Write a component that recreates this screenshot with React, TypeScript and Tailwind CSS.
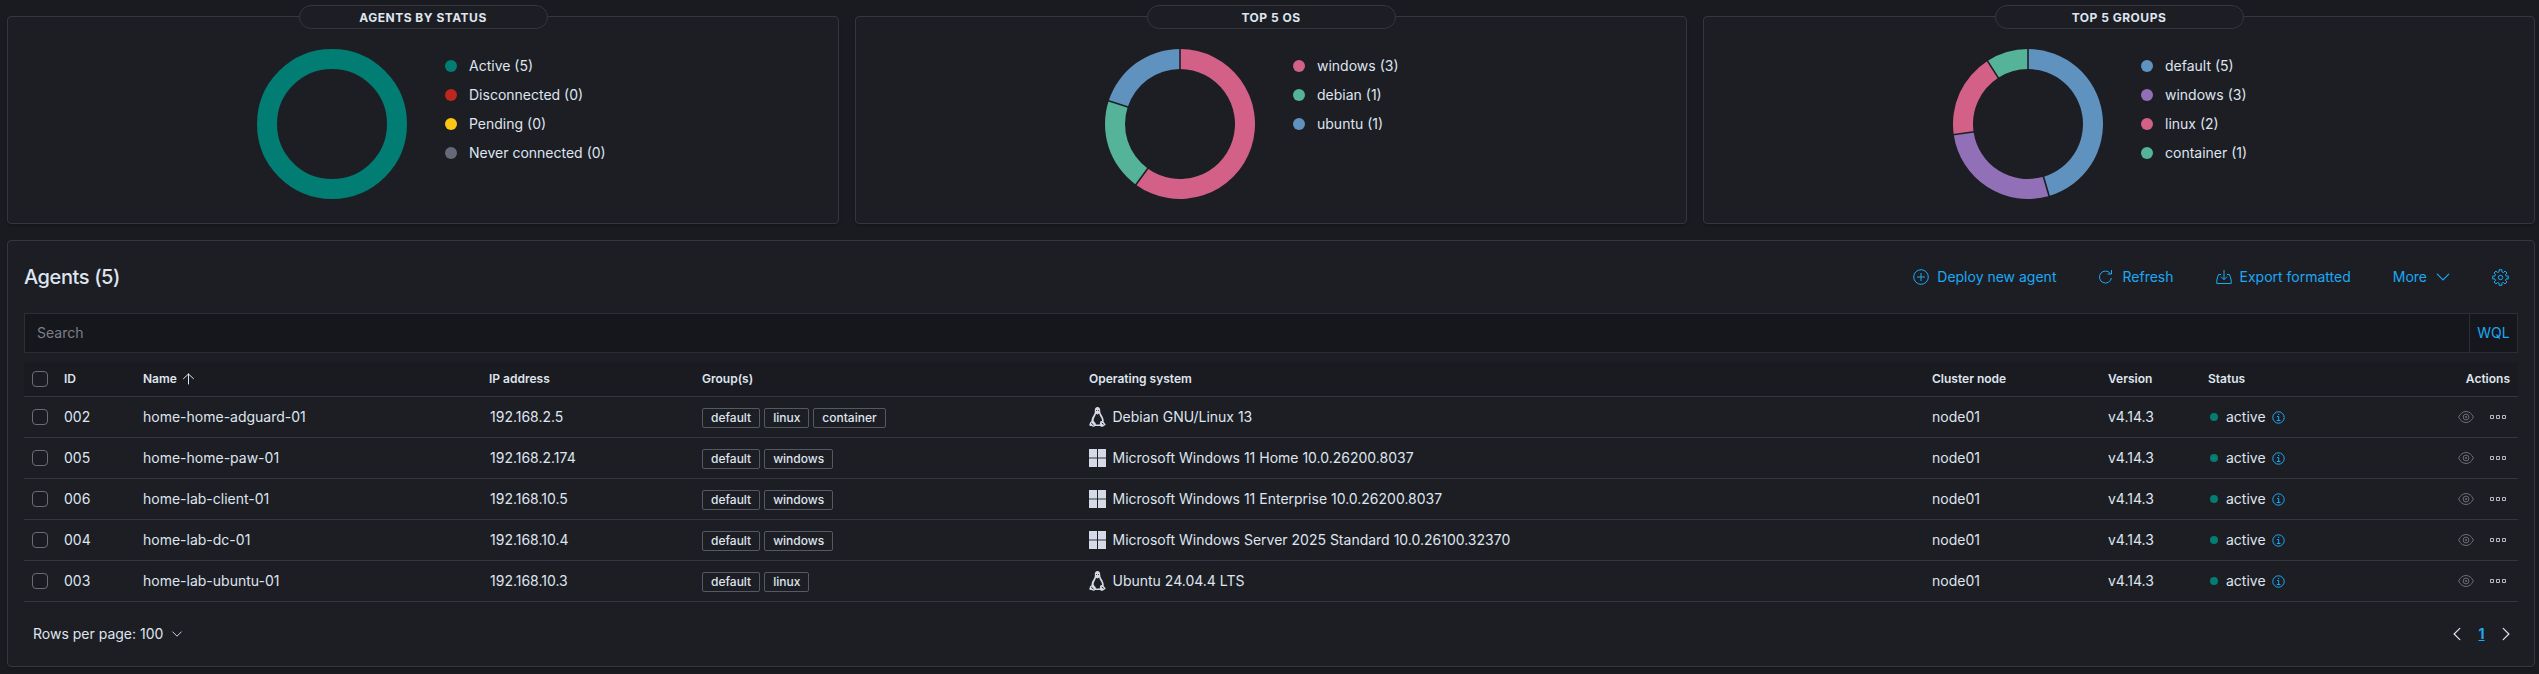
import React from "react";

const FONT = "font-['Inter','Noto_Sans',sans-serif]";

type Slice = { label: string; value: number; color: string };

const charts: { title: string; slices: Slice[] }[] = [
  {
    title: "AGENTS BY STATUS",
    slices: [
      { label: "Active", value: 5, color: "#017d73" },
      { label: "Disconnected", value: 0, color: "#bd271e" },
      { label: "Pending", value: 0, color: "#fec514" },
      { label: "Never connected", value: 0, color: "#646a77" },
    ],
  },
  {
    title: "TOP 5 OS",
    slices: [
      { label: "windows", value: 3, color: "#d36086" },
      { label: "debian", value: 1, color: "#54b399" },
      { label: "ubuntu", value: 1, color: "#6092c0" },
    ],
  },
  {
    title: "TOP 5 GROUPS",
    slices: [
      { label: "default", value: 5, color: "#6092c0" },
      { label: "windows", value: 3, color: "#9170b8" },
      { label: "linux", value: 2, color: "#d36086" },
      { label: "container", value: 1, color: "#54b399" },
    ],
  },
];

function Donut({ slices }: { slices: Slice[] }) {
  const shown = slices.filter((s) => s.value > 0);
  const total = shown.reduce((n, s) => n + s.value, 0);
  if (shown.length === 1) {
    return (
      <svg width="150" height="150" viewBox="0 0 150 150">
        <circle cx="75" cy="75" r="65" fill="none" stroke={shown[0].color} strokeWidth="20" />
      </svg>
    );
  }
  const at = (a: number, r: number) => `${75 + r * Math.sin(a)} ${75 - r * Math.cos(a)}`;
  let start = 0;
  return (
    <svg width="150" height="150" viewBox="0 0 150 150">
      {shown.map((s) => {
        const end = start + (s.value / total) * Math.PI * 2;
        const large = end - start > Math.PI ? 1 : 0;
        const d = `M${at(start, 75)}A75 75 0 ${large} 1 ${at(end, 75)}L${at(end, 55)}A55 55 0 ${large} 0 ${at(start, 55)}Z`;
        start = end;
        return <path key={s.label} d={d} fill={s.color} />;
      })}
      {shown.map((s) => {
        start += (s.value / total) * Math.PI * 2;
        return <path key={s.label} d={`M${at(start, 54)}L${at(start, 76)}`} stroke="#1d1e24" strokeWidth="1.6" />;
      })}
    </svg>
  );
}

function ChartCard({ title, slices }: { title: string; slices: Slice[] }) {
  return (
    <section className="flex h-[208px] w-[832px] flex-col items-center rounded-[4px] border border-[#343741] bg-[#1d1e24] shadow-[0_2px_3px_rgba(0,0,0,0.2)]">
      <h2 className="-mt-[12px] flex h-6 w-[249px] shrink-0 items-center justify-center rounded-[12px] border border-[#343741] bg-[#1d1e24] pt-0.5 text-[12px] font-bold tracking-[0.5px] text-[#dfe5ef]">
        {title}
      </h2>
      <div className="mt-5 flex w-full pl-[249px]">
        <Donut slices={slices} />
        <ul className="ml-[38px] mt-[2.5px] flex flex-col">
          {slices.map((s) => (
            <li key={s.label} className="flex h-[29px] items-center gap-3 text-[14px] text-[#dfe5ef]">
              <span className="size-3 rounded-full" style={{ backgroundColor: s.color }} />
              {s.label} ({s.value})
            </li>
          ))}
        </ul>
      </div>
    </section>
  );
}

type IconProps = { className?: string };

const PlusCircle = () => (
  <svg width="16" height="16" viewBox="0 0 16 16" fill="none" stroke="currentColor">
    <circle cx="8" cy="8" r="7.3" />
    <path d="M8 4v8M4 8h8" />
  </svg>
);
const Refresh = () => (
  <svg width="16" height="16" viewBox="0 0 16 16" fill="none" stroke="currentColor">
    <path d="M12.3 4.500A6 6 0 1 0 13.400 9M13.500 1v4H9.500" />
  </svg>
);
const Export = () => (
  <svg width="16" height="16" viewBox="0 0 16 16" fill="none" stroke="currentColor">
    <path d="M5 5.500H2.500L.8 11v3.500h14.400V11l-1.700-5.500H11M8 1v9.500M5 7.700l3 3 3-3" />
  </svg>
);

// Eight-toothed cog: each tooth has two base points and two tip points.
const COG = Array.from({ length: 8 }, (_, i) =>
  [
    [-13, 5.9],
    [-10.5, 7.9],
    [10.5, 7.9],
    [13, 5.9],
  ]
    .map(([deg, r]) => {
      const a = ((i * 45 + deg) * Math.PI) / 180;
      return `${(8.5 + r * Math.sin(a)).toFixed(2)},${(8.5 - r * Math.cos(a)).toFixed(2)}`;
    })
    .join(" "),
).join(" ");

const Gear = () => (
  <svg width="17" height="17" viewBox="0 0 17 17" fill="none" stroke="currentColor">
    <polygon points={COG} strokeLinejoin="round" />
    <circle cx="8.500" cy="8.500" r="2.200" />
  </svg>
);
const Chevron = ({ className = "" }: IconProps) => (
  <svg className={className} viewBox="0 0 16 16" fill="none" stroke="currentColor" strokeWidth="1.2" strokeLinecap="round">
    <path d="M2.300 5.200 8 10.900 13.700 5.200" />
  </svg>
);
const ArrowUp = () => (
  <svg width="12" height="12" viewBox="0 0 12 12" fill="none" stroke="currentColor" strokeLinecap="round">
    <path d="M6.500 1v10M1.500 5.700l5-4.700 5 4.700" />
  </svg>
);
const Info = () => (
  <svg width="13" height="13" viewBox="0 0 13 13" fill="none" stroke="currentColor">
    <circle cx="6.500" cy="6.500" r="5.700" />
    <path d="M5 5.500h1.700v4M4.800 9.500h3.600M6 3.400h1.200" />
  </svg>
);
const Eye = () => (
  <svg width="16" height="16" viewBox="0 0 16 16" fill="none" stroke="currentColor">
    <path d="M.6 8C2.500 4.300 5 2.500 8 2.500S13.500 4.300 15.400 8C13.500 11.700 11 13.500 8 13.500S2.500 11.700.6 8z" />
    <circle cx="8" cy="8" r="2.900" />
    <circle cx="8" cy="8" r=".7" />
  </svg>
);
const Boxes = () => (
  <svg width="16" height="16" viewBox="0 0 16 16" fill="none" stroke="currentColor">
    <path d="M.5 6.500h3v3h-3zM6.500 6.500h3v3h-3zM12.500 6.500h3v3h-3z" />
  </svg>
);
const Windows = () => (
  <svg width="17" height="18" viewBox="0 0 17 18" fill="#d6d9e6">
    <path d="M0 0h8v8H0zM9 0h8v8H9zM0 10h8v8H0zM9 10h8v8H9z" />
    <path d="M0 8h8v2H0zM9 8h8v2H9z" fill="#858894" />
  </svg>
);
const Linux = () => (
  <svg width="17" height="20" viewBox="0 0 17 20" fill="#d6d9e6">
    <path fillRule="evenodd" d="M8.500 0C10.400 0 11.300 1.500 11.200 3.800 11.200 6.200 12.300 7.200 13.500 9.500 14.500 11.400 15 13.300 14.600 14.700L16.700 17.400C16.900 18 15.900 18.300 14.800 18.900 13.400 20 12.200 20.200 11.300 18.900H6.200C5.300 20.300 3.700 19.500 2.600 19.100 1.400 18.800.1 18.900.2 18.200L1.100 15.300 2.500 14.300C2.300 12.400 3.300 10.300 4.300 8.800 5.400 7 5.900 6 5.800 3.800 5.700 1.400 6.600 0 8.500 0ZM7.100 6.700C6.700 8.500 5.100 10.200 4.700 12.500 4.500 13.800 5.100 14.600 6.500 16.100 7 17 7 17.300 6.700 17.600H10.800C10.900 16.500 11 15 11.500 14.300L13 14.100C13.100 11.900 12.200 10.800 11.200 9.200 10.600 8.200 10.400 7.500 10.200 6.600L8.500 7.600Z" />
    <path d="M2.200 16 4.600 18.200M12.800 16 14.600 17.400" stroke="#1d1e24" />
    <path d="M7.200 3.500h.8M9.200 3.500h.8" stroke="#1d1e24" strokeWidth=".9" />
  </svg>
);

const agents = [
  { id: "002", name: "home-home-adguard-01", ip: "192.168.2.5", groups: ["default", "linux", "container"], os: "Debian GNU/Linux 13", linux: true },
  { id: "005", name: "home-home-paw-01", ip: "192.168.2.174", groups: ["default", "windows"], os: "Microsoft Windows 11 Home 10.0.26200.8037", linux: false },
  { id: "006", name: "home-lab-client-01", ip: "192.168.10.5", groups: ["default", "windows"], os: "Microsoft Windows 11 Enterprise 10.0.26200.8037", linux: false },
  { id: "004", name: "home-lab-dc-01", ip: "192.168.10.4", groups: ["default", "windows"], os: "Microsoft Windows Server 2025 Standard 10.0.26100.32370", linux: false },
  { id: "003", name: "home-lab-ubuntu-01", ip: "192.168.10.3", groups: ["default", "linux"], os: "Ubuntu 24.04.4 LTS", linux: true },
];

const COLS =
  "grid grid-cols-[40px_79px_346px_213px_387px_843px_176px_100px_1fr] items-center border-b border-[#343741]";

const Checkbox = () => <span className="ml-2 block size-4 rounded-[4px] border border-[#6a6d76] bg-[#1b1c21]" />;

export default function App() {
  return (
    <main className={`${FONT} h-[674px] w-[2539px] overflow-hidden bg-[#1a1b20] pl-[7px] pt-4 text-[14px] leading-5 text-[#dfe5ef]`}>
      <div className="flex gap-4">
        {charts.map((c) => (
          <ChartCard key={c.title} {...c} />
        ))}
      </div>

      <section className="mt-4 flex h-[427px] w-[2528px] flex-col rounded-[4px] border border-[#343741] bg-[#1d1e24] px-4 shadow-[0_2px_3px_rgba(0,0,0,0.2)]">
        <header className="mt-4 flex h-10 items-center text-[#1ba9f5]">
          <h1 className="mr-auto text-[20px] font-medium tracking-[-0.4px] text-[#dfe5ef]">Agents (5)</h1>
          <button className="flex items-center gap-2"><PlusCircle />Deploy new agent</button>
          <button className="ml-[42px] flex items-center gap-2"><Refresh />Refresh</button>
          <button className="ml-[42px] flex items-center gap-2"><Export />Export formatted</button>
          <button className="ml-[42px] flex items-center gap-2">More<Chevron className="size-4" /></button>
          <button className="ml-[41px] mr-[9px]"><Gear /></button>
        </header>

        <div className="mt-4 flex h-10 shrink-0 border border-[#2c2e36] bg-[#16171c]">
          <span className="flex flex-1 items-center pl-3 text-[#7b7f88]">Search</span>
          <button className="flex w-12 items-center justify-center border-l border-[#2c2e36] text-[#1ba9f5]">WQL</button>
        </div>

        <div className={`${COLS} mt-[9px] h-[35px] shrink-0 bg-[#1a1b20] text-[12px] font-semibold`}>
          <Checkbox />
          <span>ID</span>
          <span className="flex items-center gap-[5px]">Name<ArrowUp /></span>
          <span>IP address</span>
          <span>Group(s)</span>
          <span>Operating system</span>
          <span>Cluster node</span>
          <span>Version</span>
          <span className="flex justify-between pr-2"><span>Status</span><span>Actions</span></span>
        </div>

        {agents.map((a) => (
          <div key={a.id} className={`${COLS} h-[41px] shrink-0`}>
            <Checkbox />
            <span>{a.id}</span>
            <span>{a.name}</span>
            <span className="pl-px">{a.ip}</span>
            <span className="flex gap-1 pt-0.5">
              {a.groups.map((g) => (
                <span key={g} className="flex h-5 items-center rounded-[2px] border border-[#535966] px-2 text-[12px] font-medium">{g}</span>
              ))}
            </span>
            <span className="flex items-center gap-[6.500px]">{a.linux ? <Linux /> : <Windows />}{a.os}</span>
            <span>node01</span>
            <span>v4.14.3</span>
            <span className="flex items-center">
              <span className="ml-[2px] mr-2 size-2 rounded-full bg-[#017d73]" />
              active
              <span className="ml-[6px] pt-px text-[#1ba9f5]"><Info /></span>
              <span className="ml-auto text-[#6a6d75]"><Eye /></span>
              <span className="ml-4 mr-3 text-[#b5bac4]"><Boxes /></span>
            </span>
          </div>
        ))}

        <footer className="mt-[22px] flex h-5 items-center justify-between pl-[9px] pr-1">
          <span className="flex items-center gap-2">Rows per page: 100<Chevron className="size-3" /></span>
          <span className="flex items-center">
            <Chevron className="size-4 rotate-90" />
            <span className="w-[33px] text-center font-bold text-[#1ba9f5] underline">1</span>
            <Chevron className="size-4 -rotate-90" />
          </span>
        </footer>
      </section>
    </main>
  );
}
